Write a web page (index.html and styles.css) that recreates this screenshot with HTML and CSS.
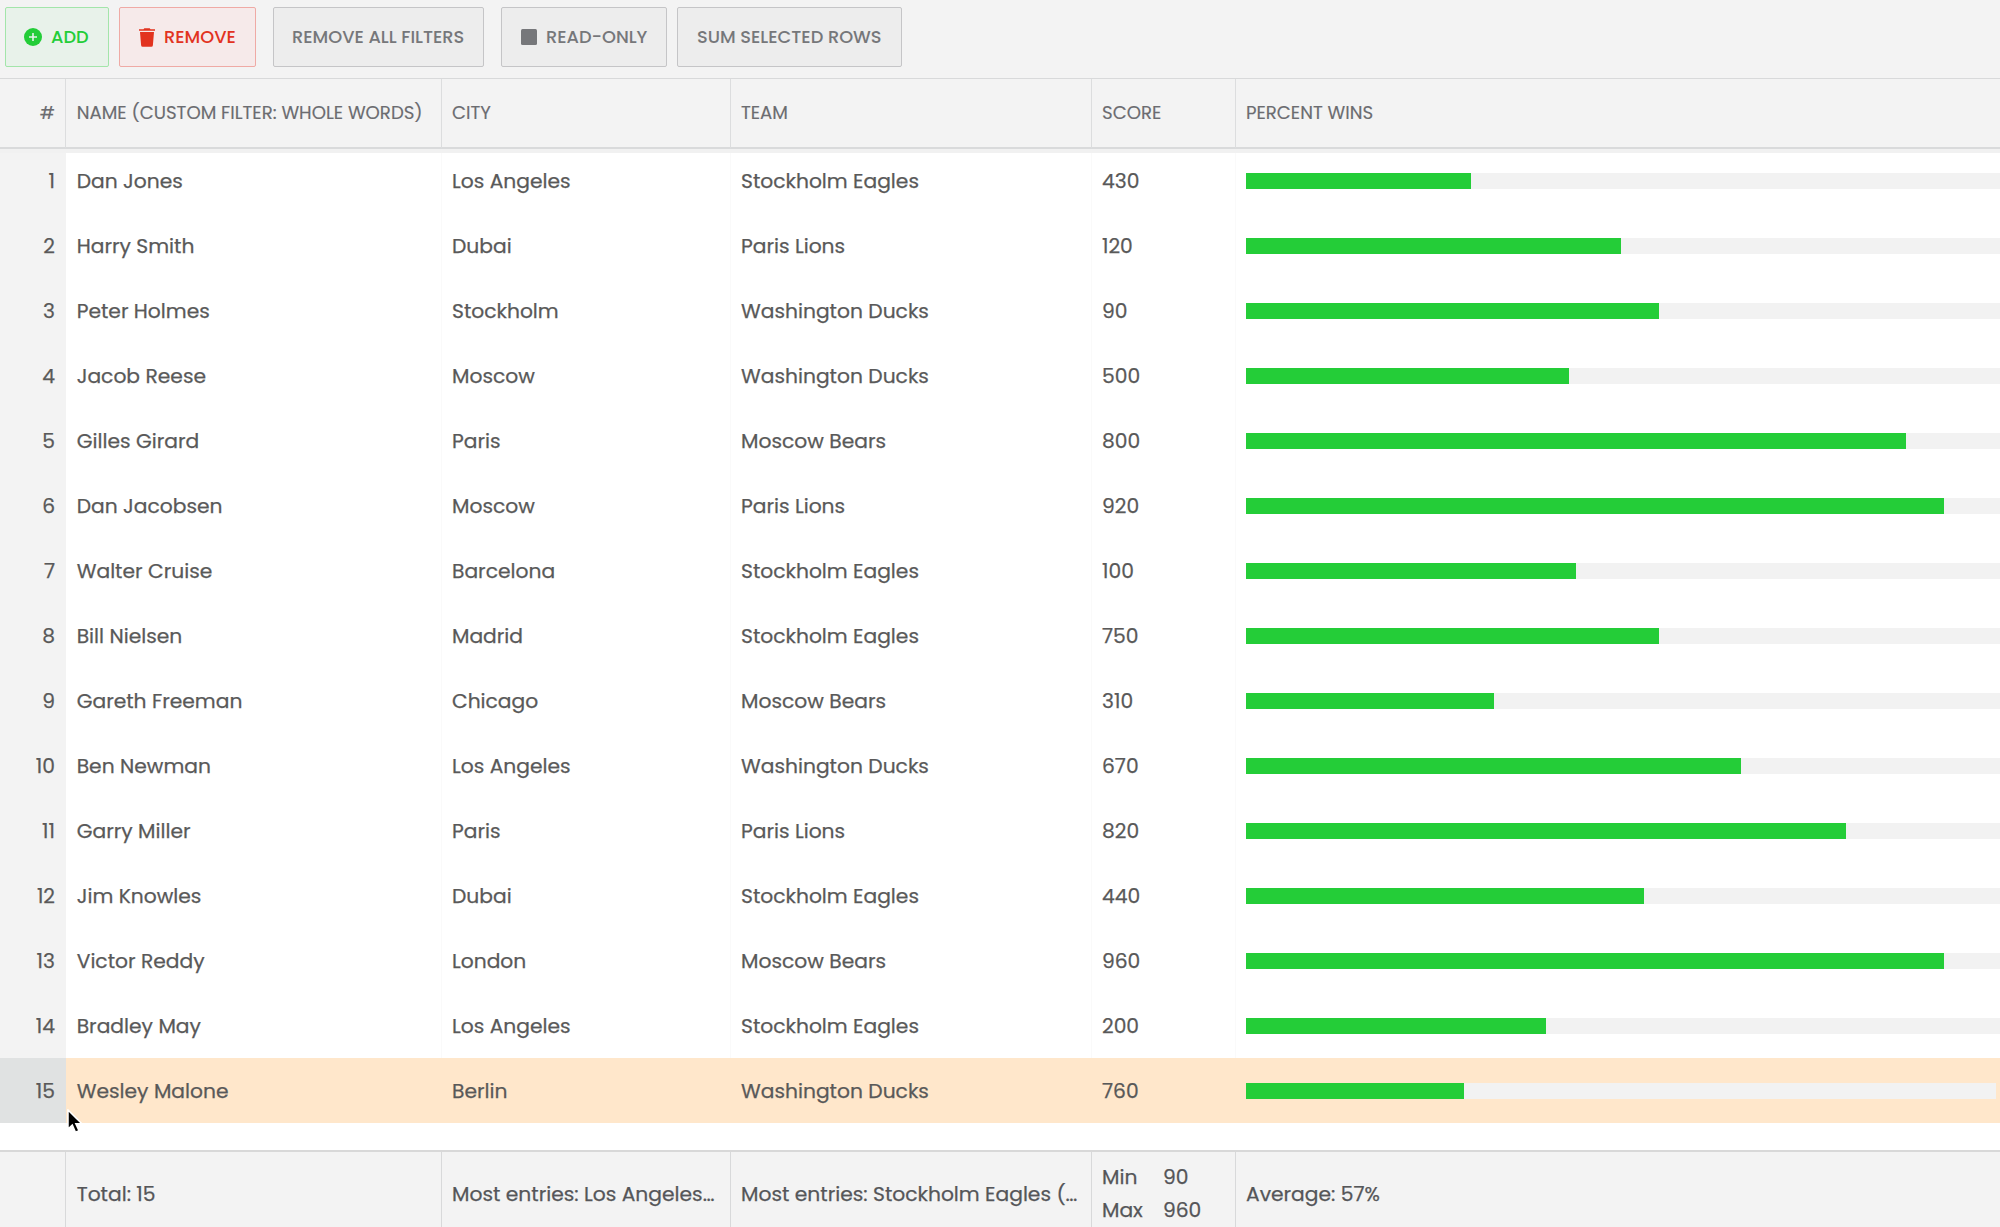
FILE: index.html
```html
<!DOCTYPE html>
<html lang="en">
<head>
<meta charset="utf-8">
<title>Grid</title>
<link rel="stylesheet" href="styles.css">
</head>
<body>
<div class="toolbar">
  <button class="btn btn-add"><svg width="18" height="18" viewBox="0 0 18 18"><circle cx="9" cy="9" r="9" fill="currentColor"/><path d="M9 5v8M5 9h8" stroke="#e8f2ea" stroke-width="1.6"/></svg><span>ADD</span></button>
  <button class="btn btn-remove"><svg width="16" height="19" viewBox="0 0 16 19"><path d="M0 1.200h4.500L5.300.2h5.400l.8 1H16v1.600H0zM1 4h14L13.900 17.300a1.600 1.600 0 0 1-1.600 1.500H3.700a1.600 1.600 0 0 1-1.600-1.500z" fill="currentColor"/></svg><span>REMOVE</span></button>
  <button class="btn btn-filters"><span>REMOVE ALL FILTERS</span></button>
  <button class="btn btn-readonly"><svg width="16" height="16" viewBox="0 0 16 16"><rect width="16" height="16" rx="1.500" fill="currentColor"/></svg><span>READ-ONLY</span></button>
  <button class="btn btn-sum"><span>SUM SELECTED ROWS</span></button>
</div>
<div class="grid">
  <div class="row header">
    <div class="cell num">#</div><div class="cell name">NAME (CUSTOM FILTER: WHOLE WORDS)</div><div class="cell">CITY</div><div class="cell">TEAM</div><div class="cell">SCORE</div><div class="cell last">PERCENT WINS</div>
  </div>
  <div class="rows" id="rows"></div>
  <div class="row footer">
    <div class="cell num"></div><div class="cell name">Total: 15</div><div class="cell">Most entries: Los Angeles…</div><div class="cell">Most entries: Stockholm Eagles (…</div>
    <div class="cell stats"><span>Min</span><span>90</span><span>Max</span><span>960</span></div><div class="cell last">Average: 57%</div>
  </div>
</div>
<svg class="cursor" width="20" height="28" viewBox="0 0 20 28"><path d="M2 1v19l4.300-4 3.200 7.300 3.500-1.500-3.200-7.100h6z" fill="#000" stroke="#fff" stroke-width="1.500"/></svg>
<script src="grid.js"></script>
</body>
</html>
```
FILE: styles.css
```css
* { box-sizing: border-box; }
body {
  margin: 0;
  width: 2000px;
  height: 1227px;
  overflow: hidden;
  background: #f3f3f3;
  color: #595959;
  font-family: Poppins, Inter, "Liberation Sans", sans-serif;
  font-size: 20.25px;
  -webkit-text-stroke: 0.25px currentColor;
}
.toolbar { display: flex; height: 78px; padding: 7px 0 0 5px; }
.btn {
  display: flex;
  align-items: center;
  height: 60px;
  padding: 0 0 0 18px;
  border: 1px solid #c5c5c7;
  border-radius: 2px;
  background: #ededed;
  color: #76777a;
  font: 500 17.8px Poppins, Inter, sans-serif;
  -webkit-text-stroke: 0;
  white-space: nowrap;
}
.btn span { padding-bottom: 2px; }
.btn svg { flex: none; margin-right: 9px; }
.btn-add { width: 104px; margin-right: 10px; background: #e8f2ea; border-color: #a3e5aa; color: #23cd38; }
.btn-remove { width: 137px; margin-right: 17px; padding-left: 19px; background: #f6eaea; border-color: #efaaa5; color: #e2331f; }
.btn-filters { width: 211px; margin-right: 17px; }
.btn-readonly { width: 166px; margin-right: 10px; padding-left: 19px; }
.btn-sum { width: 225px; padding-left: 19px; }
.row { display: grid; grid-template-columns: 66px 376px 289px 361px 144px 1fr; height: 65px; }
.cell {
  display: flex;
  align-items: center;
  padding-left: 10px;
  border-right: 1px solid #fafafa;
  white-space: nowrap;
  overflow: hidden;
}
.name { padding-left: 10.7px; }
.num { justify-content: flex-end; padding: 0 10px 0 0; }
.header {
  height: 75px;
  border-top: 1px solid #d8d9da;
  border-bottom: 4px solid #f1f1f1;
  background: #f3f3f3;
  color: #6b6c70;
  font-size: 18.15px;
  -webkit-text-stroke-width: 0.15px;
}
.header .cell { padding-bottom: 2px; border-right-color: #dcddde; border-bottom: 2px solid #d9dadb; }
.header .last, .footer .last { border-right: 0; }
.rows { height: 997px; background: #fff; }
.rows .row:first-child { height: 60px; }
.rows .row:first-child .cell { padding-bottom: 5px; }
.rows .cell span { padding-top: 1px; }
.rows .num { background: #f3f3f3; border-right: 0; padding-right: 11px; }
.rows .selected { background: #ffe7cb; }
.rows .selected .cell { border-color: transparent; }
.rows .selected .num { background: #e0e2e2; }
.rows .last { padding-right: 4px; border: 0; }
.track { flex: 1; height: 16px; background: #f2f2f2; box-shadow: 4px 0 0 #f2f2f2; }
.selected .track { box-shadow: none; }
.bar { height: 16px; background: #24cd38; }
.footer { height: 77px; border-top: 2px solid #d8d8d8; color: #555659; }
.footer .cell { border-right-color: #d8d9da; padding-top: 9px; }
.footer .stats { display: grid; grid-template-columns: 61px 1fr; grid-template-rows: 33px 33px; align-content: start; align-items: center; padding-top: 8px; }
.cursor { position: absolute; left: 66px; top: 1109px; }
```
FILE: grid.js
```js
const data = [
  ["Dan Jones", "Los Angeles", "Stockholm Eagles", 430, 30],
  ["Harry Smith", "Dubai", "Paris Lions", 120, 50],
  ["Peter Holmes", "Stockholm", "Washington Ducks", 90, 55],
  ["Jacob Reese", "Moscow", "Washington Ducks", 500, 43],
  ["Gilles Girard", "Paris", "Moscow Bears", 800, 88],
  ["Dan Jacobsen", "Moscow", "Paris Lions", 920, 93],
  ["Walter Cruise", "Barcelona", "Stockholm Eagles", 100, 44],
  ["Bill Nielsen", "Madrid", "Stockholm Eagles", 750, 55],
  ["Gareth Freeman", "Chicago", "Moscow Bears", 310, 33],
  ["Ben Newman", "Los Angeles", "Washington Ducks", 670, 66],
  ["Garry Miller", "Paris", "Paris Lions", 820, 80],
  ["Jim Knowles", "Dubai", "Stockholm Eagles", 440, 53],
  ["Victor Reddy", "London", "Moscow Bears", 960, 93],
  ["Bradley May", "Los Angeles", "Stockholm Eagles", 200, 40],
  ["Wesley Malone", "Berlin", "Washington Ducks", 760, 29]
];
document.getElementById("rows").innerHTML = data.map(([name, city, team, score, wins], i) => `
  <div class="row${i === 14 ? " selected" : ""}">
    <div class="cell num"><span>${i + 1}</span></div>
    ${[name, city, team, score].map((v, c) => `<div class="cell${c === 0 ? " name" : ""}"><span>${v}</span></div>`).join("")}
    <div class="cell last"><div class="track"><div class="bar" style="width:${wins}%"></div></div></div>
  </div>`).join("");
```
